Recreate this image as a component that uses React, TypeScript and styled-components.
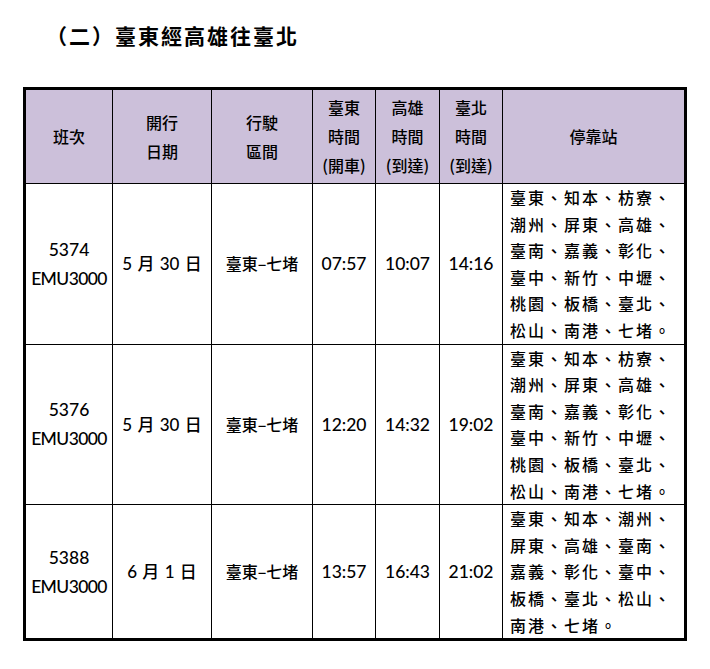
import { createGlobalStyle, styled } from "styled-components";

const GlobalStyle = createGlobalStyle`
  body {
    margin: 0;
    background: #ffffff;
    color: #000000;
    font-family: "Noto Sans CJK TC", sans-serif;
  }
`;

const Page = styled.div`
  width: 710px;
  height: 669px;
  padding: 21px 0 0 23px;
  box-sizing: border-box;
`;

const Title = styled.h2`
  margin: 0 0 0 23px;
  height: 66px;
  font-family: "Noto Sans CJK TC", serif;
  font-size: 21px;
  font-weight: 700;
  line-height: 28px;
  letter-spacing: 2px;
`;

const Table = styled.table`
  border-collapse: collapse;
  table-layout: fixed;
  width: 661px;
  border: 3px solid #000;
`;

const HeadCell = styled.th`
  background: #ccc0da;
  border: 1px solid #000;
  padding: 3px 0;
  font-family: "Noto Sans CJK TC", sans-serif;
  font-size: 16px;
  font-weight: 500;
  line-height: 29px;
  text-align: center;
  vertical-align: middle;
`;

const Cell = styled.td<{ $latin?: boolean }>`
  border: 1px solid #000;
  padding: 0;
  font-family: ${(p) =>
    p.$latin ? `Lato, "Noto Sans CJK TC", sans-serif` : `"Noto Sans CJK TC", sans-serif`};
  font-size: ${(p) => (p.$latin ? "17.5px" : "16px")};
  font-weight: 500;
  line-height: 29px;
  text-align: center;
  vertical-align: middle;
  white-space: nowrap;
`;

const Spaced = styled.span`
  font-family: Lato, "Noto Sans CJK TC", sans-serif;
  font-size: 17px;
  word-spacing: 1px;
`;

const CarType = styled.div`
  letter-spacing: -0.6px;
`;

const StopsCell = styled.td`
  border: 1px solid #000;
  padding: 0 0 0 7px;
  font-family: "Noto Sans CJK TC", sans-serif;
  font-size: 16px;
  font-weight: 500;
  line-height: 26.6px;
  letter-spacing: 2px;
  text-align: left;
  vertical-align: middle;
  white-space: nowrap;
`;

const widths = [88, 99, 101, 63, 64, 63, 183];

const headers = [
  ["班次"],
  ["開行", "日期"],
  ["行駛", "區間"],
  ["臺東", "時間", "(開車)"],
  ["高雄", "時間", "(到達)"],
  ["臺北", "時間", "(到達)"],
  ["停靠站"],
];

const trips = [
  {
    no: "5374",
    car: "EMU3000",
    date: "5 月 30 日",
    route: "臺東–七堵",
    times: ["07:57", "10:07", "14:16"],
    stops: [
      "臺東、知本、枋寮、",
      "潮州、屏東、高雄、",
      "臺南、嘉義、彰化、",
      "臺中、新竹、中壢、",
      "桃園、板橋、臺北、",
      "松山、南港、七堵。",
    ],
  },
  {
    no: "5376",
    car: "EMU3000",
    date: "5 月 30 日",
    route: "臺東–七堵",
    times: ["12:20", "14:32", "19:02"],
    stops: [
      "臺東、知本、枋寮、",
      "潮州、屏東、高雄、",
      "臺南、嘉義、彰化、",
      "臺中、新竹、中壢、",
      "桃園、板橋、臺北、",
      "松山、南港、七堵。",
    ],
  },
  {
    no: "5388",
    car: "EMU3000",
    date: "6 月 1 日",
    route: "臺東–七堵",
    times: ["13:57", "16:43", "21:02"],
    stops: [
      "臺東、知本、潮州、",
      "屏東、高雄、臺南、",
      "嘉義、彰化、臺中、",
      "板橋、臺北、松山、",
      "南港、七堵。",
    ],
  },
];

function Lines({ lines }: { lines: string[] }) {
  return (
    <>
      {lines.map((l, i) => (
        <div key={i}>{l}</div>
      ))}
    </>
  );
}

export default function App() {
  return (
    <Page>
      <GlobalStyle />
      <Title>（二）臺東經高雄往臺北</Title>
      <Table>
        <colgroup>
          {widths.map((w, i) => (
            <col key={i} style={{ width: w }} />
          ))}
        </colgroup>
        <thead>
          <tr>
            {headers.map((h, i) => (
              <HeadCell key={i}>
                <Lines lines={h} />
              </HeadCell>
            ))}
          </tr>
        </thead>
        <tbody>
          {trips.map((t) => (
            <tr key={t.no}>
              <Cell $latin>
                <div>{t.no}</div>
                <CarType>{t.car}</CarType>
              </Cell>
              <Cell>
                <Spaced>{t.date}</Spaced>
              </Cell>
              <Cell>{t.route}</Cell>
              {t.times.map((tm) => (
                <Cell $latin key={tm}>
                  {tm}
                </Cell>
              ))}
              <StopsCell>
                <Lines lines={t.stops} />
              </StopsCell>
            </tr>
          ))}
        </tbody>
      </Table>
    </Page>
  );
}
